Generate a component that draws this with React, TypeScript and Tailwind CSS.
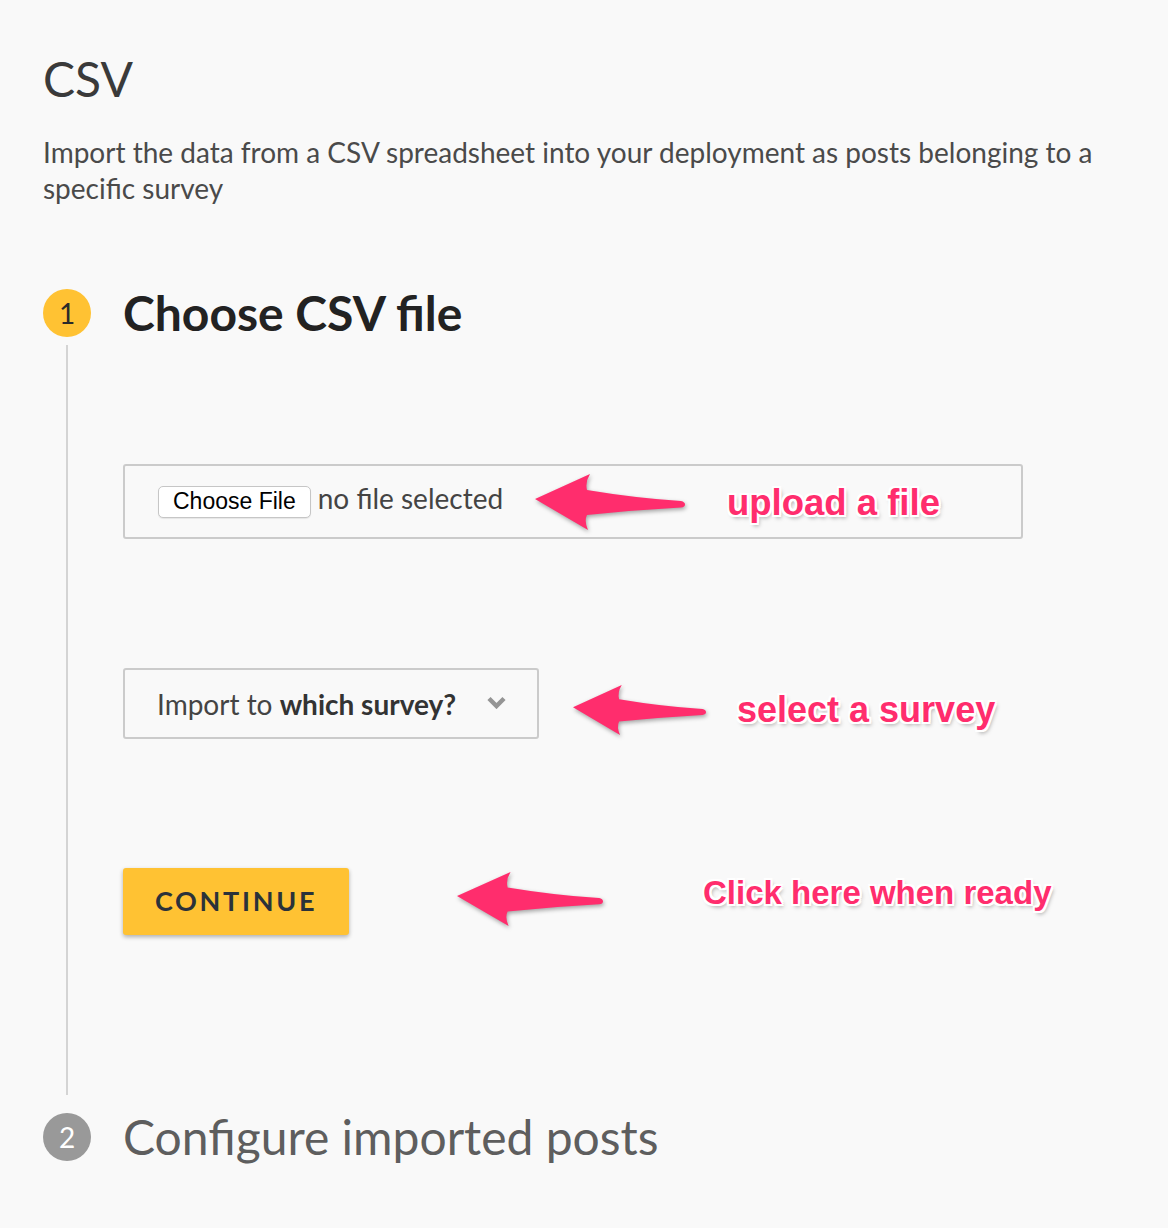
import React from 'react'

const lato = "font-['Lato','Open_Sans',sans-serif]"
const annot =
  "absolute font-['Liberation_Sans','Arial',sans-serif] font-bold text-[#ff2d6d] leading-none whitespace-nowrap [text-shadow:-2px_-2px_0_#fff,2px_-2px_0_#fff,-2px_2px_0_#fff,2px_2px_0_#fff,0_-2px_0_#fff,0_2px_0_#fff,-2px_0_0_#fff,2px_0_0_#fff,2px_3px_4px_rgba(0,0,0,0.35)]"

function Arrow({ w, h, className }: { w: number; h: number; className: string }) {
  // drawn in a 150x56 box, stretched to the given size
  return (
    <svg
      width={w}
      height={h}
      viewBox="0 0 150 56"
      preserveAspectRatio="none"
      className={`absolute drop-shadow-[1px_2px_2px_rgba(0,0,0,0.35)] ${className}`}
    >
      <path
        d="M0 25 L55 0 Q50 8 52 16 Q100 24 146 27 Q150 28 150 30.5 Q150 33 146 33.5 Q100 36 52 41 Q49 47 53 56 Z"
        fill="#ff2d6d"
      />
    </svg>
  )
}

function StepDot({ n, active }: { n: number; active?: boolean }) {
  return (
    <div
      className={`w-12 h-12 rounded-full flex items-center justify-center text-[28px] ${
        active ? 'bg-[#ffc233] text-[#2a2a2a]' : 'bg-[#999999] text-white'
      }`}
    >
      {n}
    </div>
  )
}

export default function App() {
  return (
    <div className={`min-h-screen bg-[#f9f9f9] px-[43px] pt-[51px] ${lato}`}>
      <h1 className="text-[48px] leading-[56px] text-[#3a3a3a]">CSV</h1>
      <p className="mt-[27px] text-[28px] leading-[36px] text-[#4a4a4a] pr-[20px]">
        Import the data from a CSV spreadsheet into your deployment as posts belonging to a
        specific survey
      </p>

      {/* Step 1 */}
      <div className="flex mt-[83px]">
        <div className="w-12 flex flex-col items-center shrink-0">
          <StepDot n={1} active />
          <div className="w-[2px] flex-1 bg-[#d4d4d4] mt-2 mb-[18px]" />
        </div>
        <div className="ml-8 flex-1 pb-[178px]">
          <h2 className="text-[48px] leading-[48px] font-bold text-[#222]">Choose CSV file</h2>

          {/* file input */}
          <div className="relative mt-[127px]">
            <div className="w-[900px] h-[75px] border-2 border-[#cbcbcb] rounded-[3px] flex items-center pl-[33px]">
              <button className="h-8 px-[14px] bg-white border border-[#c6c6c6] rounded-[5px] text-[23px] leading-none text-black font-['Liberation_Sans','Arial',sans-serif] shadow-[0_1px_1px_rgba(0,0,0,0.08)]">
                Choose File
              </button>
              <span className="ml-[7px] text-[28px] text-[#444] -mt-[7px]">no file selected</span>
            </div>
            <Arrow w={150} h={56} className="left-[412px] top-[10px]" />
            <span className={`${annot} text-[36.5px] left-[604px] top-[21px]`}>upload a file</span>
          </div>

          {/* survey select */}
          <div className="relative mt-[129px]">
            <div className="w-[416px] h-[71px] border-2 border-[#cbcbcb] rounded-[3px] flex items-center pl-[32px] pr-[31px]">
              <span className="text-[28px] text-[#444]">
                Import to <span className="font-bold text-[#333]">which survey?</span>
              </span>
              <svg width="19" height="13" viewBox="0 0 19 13" className="ml-auto -mt-[2px]">
                <path d="M2 2.5 L9.5 10 L17 2.5" fill="none" stroke="#959595" strokeWidth="4.5" />
              </svg>
            </div>
            <Arrow w={133} h={50} className="left-[450px] top-[17px]" />
            <span className={`${annot} text-[36px] left-[614px] top-[24px]`}>select a survey</span>
          </div>

          {/* continue */}
          <div className="relative mt-[129px]">
            <button className="w-[226px] h-[67px] bg-[#ffc233] rounded-[3px] text-[27px] font-bold tracking-[0.1em] text-[#2b323a] shadow-[0_2px_4px_rgba(0,0,0,0.3)]">
              CONTINUE
            </button>
            <Arrow w={146} h={54} className="left-[334px] top-[4px]" />
            <span className={`${annot} text-[33px] left-[580px] top-[8px]`}>Click here when ready</span>
          </div>
        </div>
      </div>

      {/* Step 2 */}
      <div className="flex items-center">
        <StepDot n={2} />
        <h2 className="ml-8 text-[48px] leading-[48px] text-[#5e5e5e]">Configure imported posts</h2>
      </div>
    </div>
  )
}
